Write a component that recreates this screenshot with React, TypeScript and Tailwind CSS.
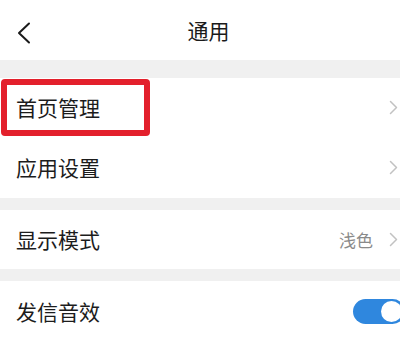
const font = { fontFamily: '"Noto Sans CJK SC", "Noto Sans", sans-serif' };

function Chevron() {
    return (
        <svg width="9" height="15" viewBox="0 0 9 15" fill="none" className="shrink-0">
            <polyline points="1.5,1.5 7.5,7.5 1.5,13.5" stroke="#c2c2c2" strokeWidth="1.5" strokeLinecap="round" strokeLinejoin="round" />
        </svg>
    );
}

function Row({ label, value, highlight }: { label: string; value?: string; highlight?: boolean }) {
    return (
        <div className="relative flex items-center h-[60px] pl-4 pr-[2px] bg-white">
            <span className="flex-1 text-[21px] text-[#1c1c1c] leading-none">{label}</span>
            {value && <span className="text-[17px] text-[#8a8a8a] mr-[16px] leading-none">{value}</span>}
            <Chevron />
            {highlight && (
                <div className="absolute left-[1px] top-[1px] w-[149px] h-[57px] border-[6px] border-[#e3202c] rounded-[4px]" />
            )}
        </div>
    );
}

export default function App() {
    return (
        <div className="w-[400px] h-[341px] overflow-hidden bg-[#f0f0f0] flex flex-col" style={font}>
            {/* Header */}
            <div className="shrink-0 relative h-[60px] bg-white flex items-center justify-center">
                <svg width="14" height="22" viewBox="0 0 14 22" fill="none" className="absolute left-[17px] top-[22px]">
                    <polyline points="12,1.5 2,11 12,20.5" stroke="#1a1a1a" strokeWidth="2" strokeLinecap="round" strokeLinejoin="round" />
                </svg>
                <h1 className="ml-[17px] text-[21px] text-[#1a1a1a] leading-none">通用</h1>
            </div>

            <div className="h-[18px] shrink-0" />
            <Row label="首页管理" highlight />
            <Row label="应用设置" />

            <div className="h-[12px] shrink-0" />
            <Row label="显示模式" value="浅色" />

            <div className="h-[12px] shrink-0" />
            <div className="flex items-center h-[60px] pl-4 bg-white">
                <span className="flex-1 text-[21px] text-[#1c1c1c] leading-none">发信音效</span>
                <div className="relative w-[52px] h-[25px] mr-[-5px] rounded-full bg-[#2f87de]">
                    <div className="absolute right-[3px] top-[2px] w-[21px] h-[21px] rounded-full bg-white" />
                </div>
            </div>
        </div>
    );
}
